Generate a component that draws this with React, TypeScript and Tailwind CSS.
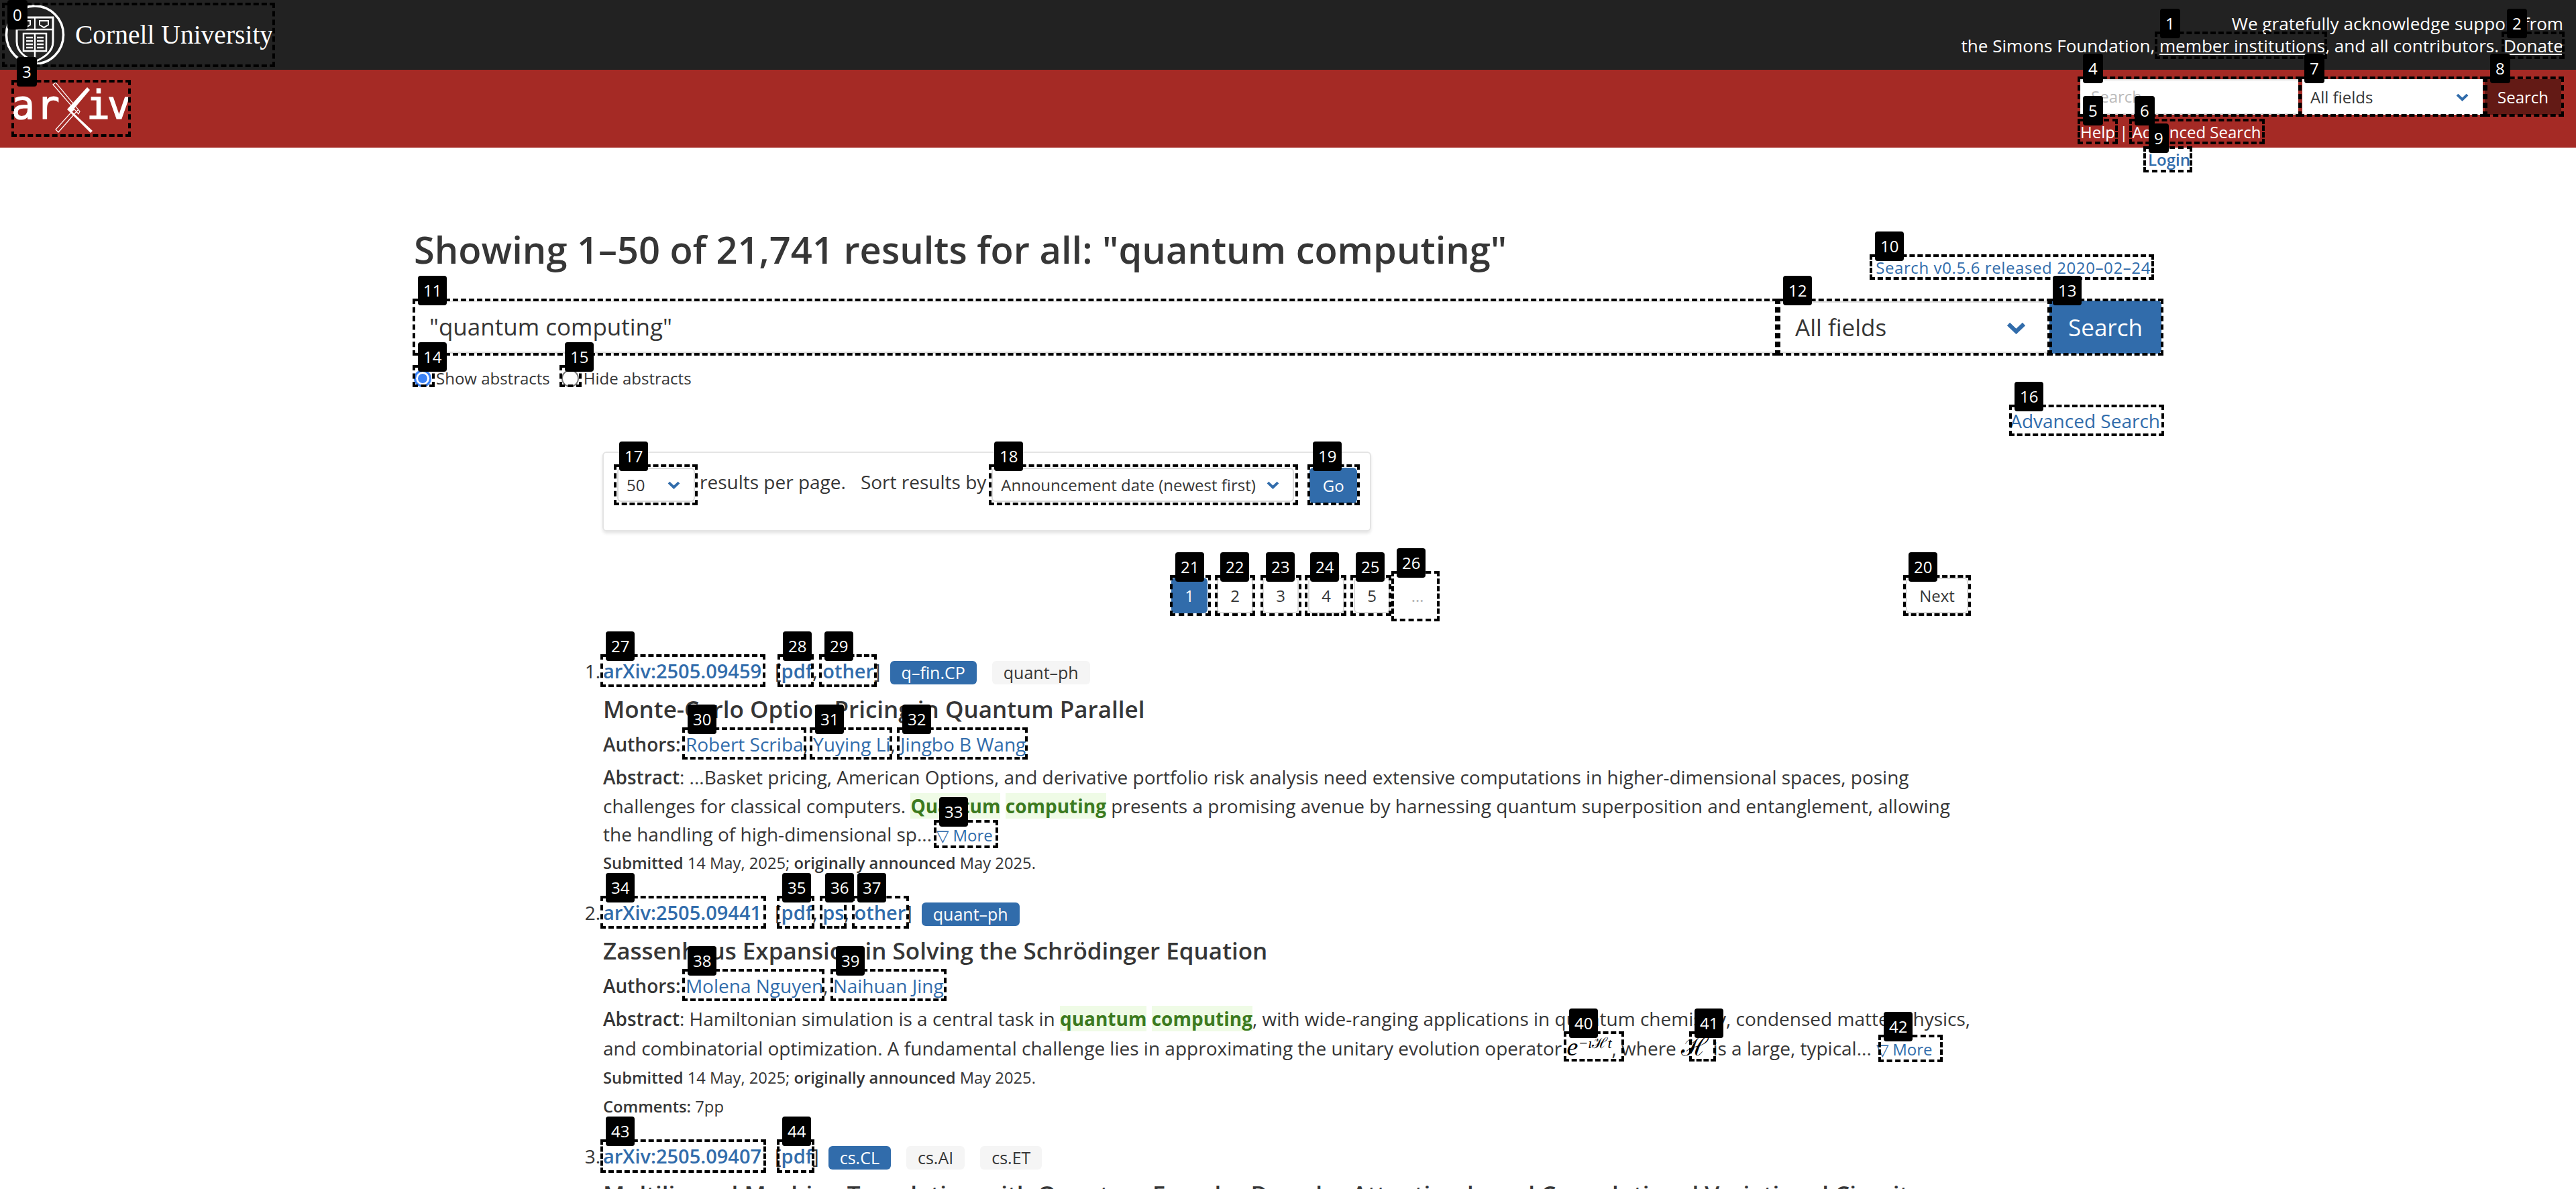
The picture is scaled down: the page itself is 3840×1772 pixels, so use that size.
import React from "react";

const boxes: [number, number, number, number, number][] = [
  [0, 3, 4, 407, 96], [1, 3212, 47, 257, 41], [2, 3729, 47, 94, 41], [3, 17, 119, 178, 85],
  [4, 3097, 114, 333, 60], [5, 3097, 177, 60, 38], [6, 3174, 177, 202, 38], [7, 3427, 114, 278, 60],
  [8, 3704, 114, 118, 60], [9, 3195, 218, 73, 39], [10, 2787, 379, 424, 38], [11, 615, 445, 2035, 85],
  [12, 2650, 445, 409, 85], [13, 3052, 445, 173, 85], [14, 615, 544, 33, 33], [15, 834, 544, 33, 33],
  [16, 2995, 603, 231, 47], [17, 915, 692, 125, 61], [18, 1474, 692, 461, 61], [19, 1949, 692, 78, 61],
  [20, 2837, 857, 101, 61], [21, 1744, 857, 61, 61], [22, 1811, 857, 60, 61], [23, 1879, 857, 61, 61],
  [24, 1945, 857, 62, 61], [25, 2013, 857, 61, 61], [26, 2074, 851, 72, 75], [27, 895, 975, 246, 49],
  [28, 1159, 975, 54, 49], [29, 1221, 975, 86, 49], [30, 1017, 1084, 185, 48], [31, 1207, 1084, 123, 48],
  [32, 1337, 1084, 195, 48], [33, 1392, 1222, 96, 42], [34, 895, 1335, 247, 49], [35, 1158, 1335, 56, 49],
  [36, 1222, 1335, 40, 49], [37, 1270, 1335, 85, 49], [38, 1017, 1444, 212, 48], [39, 1238, 1444, 173, 48],
  [40, 2331, 1537, 90, 45], [41, 2518, 1537, 40, 45], [42, 2800, 1542, 96, 41], [43, 895, 1698, 247, 50],
  [44, 1158, 1698, 56, 50],
];

function Chevron({ className }: { className: string }) {
  return (
    <svg viewBox="0 0 29 18" className={className}>
      <polyline points="3,3 14.5,14 26,3" fill="none" stroke="#316cab" strokeWidth="6" />
    </svg>
  );
}

function CornellLogo() {
  return (
    <svg viewBox="0 0 90 92" className="h-[92px] w-[90px] shrink-0">
      <ellipse cx="45" cy="46" rx="42.5" ry="43" fill="none" stroke="#fff" strokeWidth="3.5" />
      <path d="M18 20 H72 V56 C72 72 58 80 45 86 C32 80 18 72 18 56 Z" fill="#222" stroke="#fff" strokeWidth="3" />
      <path d="M18 38 H72" stroke="#fff" strokeWidth="2.5" />
      <path d="M45 20 V38" stroke="#fff" strokeWidth="2" />
      <path d="M25 25 H38 V31 L31.5 35 L25 31 Z M52 25 H65 V31 L58.5 35 L52 31 Z" fill="none" stroke="#fff" strokeWidth="2" />
      <path d="M28 44 H62 V70 H28 Z" fill="none" stroke="#fff" strokeWidth="2.5" />
      <path d="M45 44 V86" stroke="#fff" strokeWidth="2.5" />
      <path d="M32 50 H42 M32 55 H42 M32 60 H42 M32 65 H42 M48 50 H58 M48 55 H58 M48 60 H58 M48 65 H58" stroke="#fff" strokeWidth="2.5" />
    </svg>
  );
}

function ArxivLogo() {
  const t = { fontFamily: "'DejaVu Sans Mono', monospace", fontWeight: 400, fontSize: 58, fill: "#fff", stroke: "#fff", strokeWidth: 1.2 };
  return (
    <svg viewBox="0 0 178 85" className="h-[85px] w-[178px]">
      <text x="0" y="58" {...t}>a</text>
      <text x="37" y="58" {...t}>r</text>
      <text x="112" y="58" {...t}>i</text>
      <text x="143" y="58" {...t}>v</text>
      <path d="M62 7 L66 4 L102 47 L100 51 Z M100 44 L70 78 L66 74 L94 43" fill="none" stroke="#fff" strokeWidth="1.2" />
      <path d="M113 11 L117 15 L90 47 L121 76 L118 79 L83 44 Z" fill="#fff" />
    </svg>
  );
}

function Tag({ children, primary }: { children: React.ReactNode; primary?: boolean }) {
  return (
    <span className={primary
      ? "flex h-[35px] items-center rounded-[6px] bg-[#316cab] px-[17px] text-[25px] text-white"
      : "flex h-[35px] items-center rounded-[6px] bg-[#f5f5f5] px-[17px] text-[25px] text-[#363636]"}>
      {children}
    </span>
  );
}

function L({ children }: { children: React.ReactNode }) {
  return <span className="text-[#316cab]">{children}</span>;
}

function H({ children }: { children: React.ReactNode }) {
  return <span className="bg-[#effbe6] font-bold text-[#3c7a1e]">{children}</span>;
}

function More() {
  return <span className="text-[24px] text-[#316cab]">▽ More</span>;
}

function IdRow({ id, links, tags }: { id: string; links: string[]; tags: [string, boolean][] }) {
  return (
    <div className="flex h-[34px] items-center whitespace-nowrap text-[29px]">
      <span className="font-semibold text-[#316cab]">arXiv:{id}</span>
      <span className="ml-[20px]">
        [{links.map((l, i) => (
          <span key={l}>
            {i > 0 ? ", " : ""}
            <span className="font-semibold text-[#316cab]">{l}</span>
          </span>
        ))}]
      </span>
      <span className="ml-[14px] mt-[5px] flex gap-[23px]">
        {tags.map(([t, p]) => (
          <Tag key={t} primary={p}>{t}</Tag>
        ))}
      </span>
    </div>
  );
}

function Title({ children }: { children: React.ReactNode }) {
  return <div className="mt-[20px] h-[40px] whitespace-nowrap text-[35px] font-semibold leading-[40px]">{children}</div>;
}

function Authors({ names }: { names: string[] }) {
  return (
    <div className="mt-[13px] h-[38px] whitespace-nowrap text-[28px] leading-[38px]">
      <span className="font-semibold">Authors:</span>{" "}
      {names.map((n, i) => (
        <span key={n}>
          {i > 0 ? ", " : ""}
          <L>{n}</L>
        </span>
      ))}
    </div>
  );
}

function Line({ children }: { children: React.ReactNode }) {
  return <div className="h-[42.5px] whitespace-nowrap text-[28px] leading-[42.5px]">{children}</div>;
}

function Meta({ children }: { children: React.ReactNode }) {
  return <div className="h-[42.5px] whitespace-nowrap text-[23.75px] leading-[42.5px]">{children}</div>;
}

function Submitted() {
  return (
    <Meta>
      <span className="font-semibold">Submitted</span> 14 May, 2025; <span className="font-semibold">originally announced</span> May 2025.
    </Meta>
  );
}

function Result({ n, children }: { n: number; children: React.ReactNode }) {
  return (
    <li className="flex">
      <span className="h-[34px] w-[49px] shrink-0 pr-[4px] text-right text-[28px] leading-[34px]">{n}.</span>
      <div className="mb-[36px] min-w-0">{children}</div>
    </li>
  );
}

function PageBtn({ n, active }: { n: string; active?: boolean }) {
  return (
    <span className={active
      ? "flex h-[53px] w-[54px] items-center justify-center rounded-[6px] bg-[#316cab] text-[24px] text-white"
      : "flex h-[53px] w-[54px] items-center justify-center rounded-[6px] border-2 border-[#dbdbdb] text-[24px] text-[#363636]"}>
      {n}
    </span>
  );
}

export default function App() {
  return (
    <div className="relative h-[1772px] w-[3840px] overflow-hidden bg-white font-['Open_Sans',sans-serif] text-[#363636]">
      <header className="flex h-[104px] items-start justify-between bg-[#222222] text-white">
        <div className="flex items-center pl-[7px] pt-[6px]">
          <CornellLogo />
          <span className="ml-[15px] font-['Liberation_Serif',serif] text-[39.5px] leading-[92px] text-white">Cornell University</span>
        </div>
        <div className="pr-[19px] pt-[19px] text-right text-[26.1px] font-medium leading-[33px]">
          <div>We gratefully acknowledge support from</div>
          <div>
            the Simons Foundation, <span className="underline">member institutions</span>, and all contributors. <span className="underline">Donate</span>
          </div>
        </div>
      </header>

      <div className="flex h-[116px] justify-between bg-[#a52a25]">
        <div className="pl-[17px] pt-[15px]">
          <ArxivLogo />
        </div>
        <div className="mr-[21px] w-[718px] pt-[14px]">
          <div className="flex h-[53px] text-[24px]">
            <div className="flex w-[325px] items-center border-b-2 border-[#dbdbdb] bg-white pl-[16px] text-[#bbbbbb] shadow-[inset_0_2px_2px_rgba(10,10,10,0.1)]">Search...</div>
            <div className="ml-[6px] flex w-[269px] items-center justify-between bg-white pl-[12px] pr-[21px] text-[#363636]">
              All fields
              <Chevron className="h-[12px] w-[19px]" />
            </div>
            <div className="ml-[3px] flex w-[114px] items-center justify-center bg-[#631a15] text-white">Search</div>
          </div>
          <div className="mt-[8px] text-[24px] leading-[36px] text-white">Help | Advanced Search</div>
        </div>
      </div>

      <div className="flex h-[35px] items-center justify-end pr-[575px] text-[24px] font-semibold text-[#316cab]">Login</div>

      <main className="ml-[617px] w-[2605px]">
        <div className="mt-[78px] flex h-[76px] items-start justify-between">
          <h1 className="whitespace-nowrap text-[56px] font-semibold leading-[76px]">Showing 1–50 of 21,741 results for all: "quantum computing"</h1>
          <span className="mr-[16px] mt-[48px] whitespace-nowrap text-[24px] tracking-[0.6px] text-[#316cab]">Search v0.5.6 released 2020–02–24</span>
        </div>

        <div className="mt-[39px] flex h-[79px] text-[35px]">
          <div className="flex w-[2035px] items-center border-b-[3px] border-[#dbdbdb] pl-[23px] pt-[3px] shadow-[inset_0_2px_2px_rgba(10,10,10,0.1)]">"quantum computing"</div>
          <div className="ml-[3px] flex w-[397px] items-center justify-between border-y-[3px] border-[#dbdbdb] pl-[21px] pr-[32px] pt-[2px]">
            All fields
            <Chevron className="h-[18px] w-[29px]" />
          </div>
          <div className="ml-[3px] flex w-[167px] items-center justify-center rounded-[6px] bg-[#316cab] pt-[2px] text-white">Search</div>
        </div>

        <div className="mt-[19px] flex h-[36px] items-center text-[24px]">
          <span className="h-[26px] w-[26px] rounded-full border-[3px] border-[#3b82f6] bg-[#3b82f6] shadow-[inset_0_0_0_3px_#ffffff]" />
          <span className="ml-[7px]">Show abstracts</span>
          <span className="ml-[17px] h-[26px] w-[26px] rounded-full border-2 border-[#767676] bg-white" />
          <span className="ml-[7px]">Hide abstracts</span>
        </div>

        <div className="mt-[26px] flex justify-end pr-[2px] text-[28px] leading-[38px] text-[#316cab]">Advanced Search</div>

        <div className="ml-[281px] mt-[27px] flex h-[119px] w-[1146px] items-start rounded-[6px] border-2 border-[#e4e4e4] pl-[20px] pt-[22px] shadow-[0_3px_4px_rgba(10,10,10,0.1)]">
          <div className="flex h-[51px] w-[116px] items-center justify-between rounded-[6px] border-2 border-[#dbdbdb] pl-[12px] pr-[20px] text-[24px]">
            50
            <Chevron className="h-[12px] w-[19px]" />
          </div>
          <span className="ml-[7px] h-[51px] whitespace-nowrap text-[28px] leading-[42px]">results per page.</span>
          <span className="ml-[22px] h-[51px] whitespace-nowrap text-[28px] leading-[42px]">Sort results by</span>
          <div className="ml-[8px] flex h-[51px] w-[451px] items-center justify-between rounded-[6px] border-2 border-[#dbdbdb] pl-[12px] pr-[20px] text-[24px]">
            <span className="whitespace-nowrap">Announcement date (newest first)</span>
            <Chevron className="h-[12px] w-[19px]" />
          </div>
          <div className="ml-[23px] flex h-[53px] w-[71px] items-center justify-center rounded-[6px] bg-[#316cab] text-[24px] text-white">Go</div>
        </div>

        <div className="ml-[281px] mt-[69px] flex w-[2036px]">
          <div className="ml-[848px] flex gap-[14px]">
            <PageBtn n="1" active />
            <PageBtn n="2" />
            <PageBtn n="3" />
            <PageBtn n="4" />
            <PageBtn n="5" />
            <span className="flex h-[53px] w-[54px] items-end justify-center pb-[8px] text-[24px] text-[#b5b5b5]">…</span>
          </div>
          <span className="ml-auto flex h-[53px] w-[93px] items-center justify-center rounded-[6px] border-2 border-[#dbdbdb] text-[24px]">Next</span>
        </div>
      </main>

      <ol className="ml-[850px] mt-[69px]">
        <Result n={1}>
          <IdRow id="2505.09459" links={["pdf", "other"]} tags={[["q–fin.CP", true], ["quant–ph", false]]} />
          <Title>Monte-Carlo Option Pricing in Quantum Parallel</Title>
          <Authors names={["Robert Scriba", "Yuying Li", "Jingbo B Wang"]} />
          <div className="mt-[9px]">
            <Line><span className="font-semibold">Abstract</span>: ...Basket pricing, American Options, and derivative portfolio risk analysis need extensive computations in higher-dimensional spaces, posing</Line>
            <Line>challenges for classical computers. <H>Quantum</H> <H>computing</H> presents a promising avenue by harnessing quantum superposition and entanglement, allowing</Line>
            <Line>the handling of high-dimensional sp... <More /></Line>
          </div>
          <Submitted />
        </Result>
        <Result n={2}>
          <IdRow id="2505.09441" links={["pdf", "ps", "other"]} tags={[["quant–ph", true]]} />
          <Title>Zassenhaus Expansion in Solving the Schrödinger Equation</Title>
          <Authors names={["Molena Nguyen", "Naihuan Jing"]} />
          <div className="mt-[9px]">
            <Line><span className="font-semibold">Abstract</span>: Hamiltonian simulation is a central task in <H>quantum</H> <H>computing</H>, with wide-ranging applications in quantum chemistry, condensed matter physics,</Line>
            <div className="mb-[2px] mt-[1px]">
              <Line>
                and combinatorial optimization. A fundamental challenge lies in approximating the unitary evolution operator{" "}
                <span className="font-['Liberation_Serif',serif] text-[38px] italic leading-none text-black">e<sup className="text-[22px] leading-none">−ı<span className="not-italic">ℋ</span>t</sup></span>, where{" "}
                <span className="font-['Liberation_Serif',serif] text-[38px] leading-none text-black">ℋ</span> is a large, typical... <More />
              </Line>
            </div>
          </div>
          <Submitted />
          <Meta><span className="font-semibold">Comments:</span> 7pp</Meta>
        </Result>
        <Result n={3}>
          <IdRow id="2505.09407" links={["pdf"]} tags={[["cs.CL", true], ["cs.AI", false], ["cs.ET", false]]} />
          <Title>Multilingual Machine Translation with Quantum Encoder Decoder Attention-based Convolutional Variational Circuits</Title>
        </Result>
      </ol>

      <div className="pointer-events-none absolute inset-0">
        {boxes.map(([n, x, y, w, h]) => (
          <div key={n} className="absolute border-[4px] border-dashed border-black" style={{ left: x, top: y, width: w, height: h }} />
        ))}
        {boxes.map(([n, x, y]) => (
          <span key={n} className="absolute flex h-[44px] items-center rounded-[4px] bg-black px-[8px] text-[24px] text-white" style={{ left: x + 8, top: Math.max(0, y - 34) }}>
            {n}
          </span>
        ))}
      </div>
    </div>
  );
}
